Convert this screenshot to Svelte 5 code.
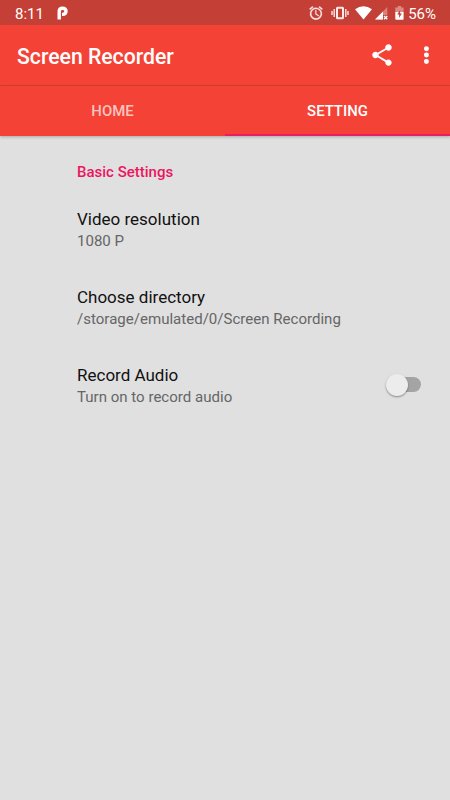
<script lang="ts">
  interface Setting {
    id: string;
    title: string;
    summary: string;
    toggle?: boolean;
  }

  const tabs = ['Home', 'Setting'];

  const settings: Setting[] = [
    { id: 'resolution', title: 'Video resolution', summary: '1080 P' },
    { id: 'directory', title: 'Choose directory', summary: '/storage/emulated/0/Screen Recording' },
    { id: 'audio', title: 'Record Audio', summary: 'Turn on to record audio', toggle: true }
  ];

  let activeTab = $state('Setting');
  let recordAudio = $state(false);
</script>

<div class="screen">
  <div class="status-bar">
    <span class="clock">8:11</span>
    <svg class="app-mark" width="12" height="14" viewBox="0 0 12 14">
      <path d="M2.2 13.5V5.2Q2.2 2.2 5.6 2.2Q9 2.2 9 5.3Q9 8.4 5.6 8.4H5" fill="none" stroke="#fff" stroke-width="3.4" />
    </svg>
    <div class="status-icons">
      <!-- alarm -->
      <svg class="alarm" width="14" height="14" viewBox="1.5 1.5 21 21" fill="#fbe9e8" stroke="#fbe9e8" stroke-width=".4">
        <path d="M22 5.72l-4.6-3.86-1.29 1.53 4.6 3.86L22 5.72zM7.88 3.39L6.6 1.86 2 5.71l1.29 1.53 4.59-3.85zM12.5 8H11v6l4.75 2.85.75-1.23-4-2.37V8zM12 4c-4.97 0-9 4.03-9 9s4.02 9 9 9a9 9 0 000-18zm0 16c-3.87 0-7-3.13-7-7s3.13-7 7-7 7 3.13 7 7-3.13 7-7 7z" />
      </svg>
      <!-- vibrate -->
      <svg class="vibrate" width="18" height="14" viewBox="0 0 18 14">
        <rect x="6" y="1.7" width="6" height="10.6" rx=".5" fill="none" stroke="#fbe9e8" stroke-width="2" />
        <path d="M3.2 3V11M14.8 3V11M1 5V9M17 5V9" stroke="#fbe9e8" stroke-width="1.4" />
      </svg>
      <!-- wifi -->
      <svg class="wifi" width="17" height="14" viewBox="0 0 17 14">
        <path d="M0 3.2Q8.5-2.8 17 3.2L8.5 13.5Z" fill="#fff" />
      </svg>
      <!-- cell signal without data -->
      <svg class="signal" width="13" height="13" viewBox="0 0 13 13">
        <path d="M12.3 0V8H8V12.5H0Z" fill="#fff" fill-opacity=".35" />
        <path d="M8 4.4V12.5H0Z" fill="#fff" />
        <path d="M9 9L12.3 12.3M12.3 9L9 12.3" stroke="#fff" stroke-width="1.3" />
      </svg>
      <!-- battery -->
      <svg class="battery" width="9" height="14" viewBox="0 0 9 14">
        <path d="M2.8 0H6.2V1.5H8.6V6H.3V1.5H2.8Z" fill="#fff" fill-opacity=".4" />
        <path d="M.3 6H8.6V13.1Q8.6 13.8 7.9 13.8H1Q.3 13.8 .3 13.1Z" fill="#fff" />
        <path d="M5.1 4L2.2 8.6H4.1V12L6.8 7.5H5.1Z" fill="#c43f35" />
      </svg>
      <span class="percent">56%</span>
    </div>
  </div>

  <header class="toolbar">
    <h1 class="title">Screen Recorder</h1>
    <button class="icon-button share" aria-label="Share">
      <svg width="26" height="26" viewBox="0 0 24 24" fill="#fff">
        <path d="M18 16.08c-.76 0-1.44.3-1.96.77L8.91 12.7c.05-.23.09-.46.09-.7s-.04-.47-.09-.7l7.05-4.11c.54.5 1.25.81 2.04.81 1.66 0 3-1.34 3-3s-1.34-3-3-3-3 1.34-3 3c0 .24.04.47.09.7L8.04 9.81C7.5 9.31 6.79 9 6 9c-1.66 0-3 1.34-3 3s1.34 3 3 3c.79 0 1.5-.31 2.04-.81l7.12 4.16c-.05.21-.08.43-.08.65 0 1.61 1.31 2.92 2.92 2.92s2.92-1.31 2.92-2.92-1.31-2.92-2.92-2.92z" />
      </svg>
    </button>
    <button class="icon-button more" aria-label="More options">
      <svg width="26" height="26" viewBox="0 0 24 24" fill="#fff">
        <circle cx="12.4" cy="6.2" r="2.3" />
        <circle cx="12.4" cy="12.1" r="2.3" />
        <circle cx="12.4" cy="18" r="2.3" />
      </svg>
    </button>
  </header>

  <nav class="tabs">
    {#each tabs as tab (tab)}
      <button class="tab" class:active={activeTab === tab} onclick={() => (activeTab = tab)}>{tab}</button>
    {/each}
  </nav>

  <main class="settings">
    <h2 class="category">Basic Settings</h2>
    {#each settings as item (item.id)}
      <div class="setting">
        <div class="labels">
          <div class="name">{item.title}</div>
          <div class="summary">{item.summary}</div>
        </div>
        {#if item.toggle}
          <button
            class="switch"
            class:on={recordAudio}
            role="switch"
            aria-checked={recordAudio}
            aria-label={item.title}
            onclick={() => (recordAudio = !recordAudio)}
          >
            <span class="thumb"></span>
          </button>
        {/if}
      </div>
    {/each}
  </main>
</div>

<style>
  :global(body) {
    margin: 0;
    background: #e0e0e0;
  }

  .screen {
    height: 800px;
    overflow: hidden;
    background: #e0e0e0;
    font-family: Roboto, sans-serif;
  }

  button {
    padding: 0;
    border: none;
    background: none;
    font-family: inherit;
    cursor: pointer;
  }

  .status-bar {
    display: flex;
    align-items: center;
    box-sizing: border-box;
    height: 25px;
    padding: 1px 15px 0 15px;
    background: #c43f35;
    color: #fff;
    font-size: 15px;
    line-height: 22px;
  }

  .clock,
  .percent {
    padding-top: 2px;
  }

  .app-mark {
    margin-left: 13px;
  }

  .status-icons {
    display: flex;
    align-items: center;
    margin-left: auto;
  }

  .vibrate {
    margin-left: 8px;
  }

  .wifi {
    margin-left: 6px;
  }

  .signal {
    margin-left: 3px;
  }

  .battery {
    margin-left: 7px;
  }

  .percent {
    margin-right: -1px;
    margin-left: 4px;
  }

  .toolbar {
    display: flex;
    align-items: center;
    box-sizing: border-box;
    height: 61px;
    padding: 0 11px 0 17px;
    border-bottom: 1px solid #d83e33;
    background: #f44336;
  }

  .title {
    flex: 1;
    margin: 0;
    padding-top: 2px;
    color: #fff;
    font-size: 21.2px;
    font-weight: 500;
  }

  .icon-button {
    display: flex;
  }

  .more {
    margin-left: 18px;
  }

  .tabs {
    display: flex;
    height: 50px;
    background: #f44336;
    box-shadow: 0 1px 3px rgba(0, 0, 0, 0.25);
  }

  .tab {
    flex: 1;
    box-sizing: border-box;
    padding-top: 1px;
    border-bottom: 2px solid transparent;
    color: rgba(255, 255, 255, 0.7);
    font-size: 14.9px;
    font-weight: 500;
    text-transform: uppercase;
  }

  .tab.active {
    border-bottom-color: #e91e63;
    color: #fff;
  }

  .settings {
    padding: 26px 29px 0 77px;
  }

  .category {
    margin: 0;
    color: #ec1561;
    font-size: 15px;
    font-weight: 500;
    line-height: 20px;
  }

  .setting {
    display: flex;
    align-items: flex-start;
    height: 78px;
  }

  .category + .setting {
    margin-top: 26px;
  }

  .labels {
    flex: 1;
  }

  .name {
    color: #111;
    font-size: 17px;
    line-height: 22px;
  }

  .summary {
    color: #666;
    font-size: 15.05px;
    line-height: 22px;
  }

  .switch {
    display: flex;
    align-items: center;
    width: 34px;
    height: 15px;
    margin-top: 13px;
    border-radius: 8px;
    background: #a4a4a4;
  }

  .thumb {
    width: 22px;
    height: 22px;
    margin-left: -1px;
    border-radius: 50%;
    background: #ececec;
    box-shadow: 0 1px 2px rgba(0, 0, 0, 0.4);
  }

  .switch.on {
    justify-content: flex-end;
    background: #f48fb1;
  }

  .switch.on .thumb {
    background: #e91e63;
  }
</style>
